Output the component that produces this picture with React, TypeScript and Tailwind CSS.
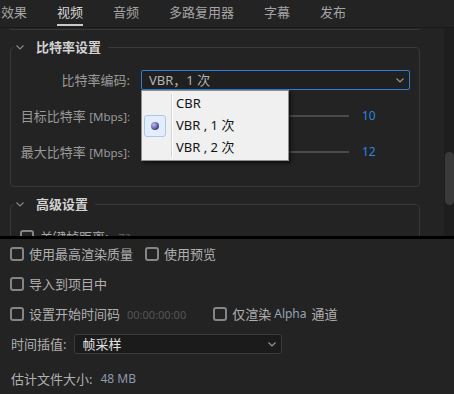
import React from "react";

const TABS = ["效果", "视频", "音频", "多路复用器", "字幕", "发布"];

function Chevron({ className }: { className?: string }) {
  return (
    <svg width="8" height="5" viewBox="0 0 8 5" className={className}>
      <polyline points="0.5,0.5 4,4 7.5,0.5" fill="none" stroke="currentColor" strokeWidth="1.1" />
    </svg>
  );
}

function Box() {
  return <span className="h-[14px] w-[14px] shrink-0 rounded-[3px] border-2 border-[#858585]" />;
}

function Legend({ title }: { title: string }) {
  return (
    <legend className="ml-[3px] flex h-[20px] items-center pl-[2px] pr-[7px]">
      <Chevron className="text-[#8a8a8a]" />
      <span className="ml-[12px] text-[13px] font-bold text-[#d2d2d2]">{title}</span>
    </legend>
  );
}

function SliderRow({ label, value }: { label: string; value: string }) {
  return (
    <div className="flex h-[20px] items-center">
      <div className="w-[119px] shrink-0 text-right text-[#9a9a9a]">
        <span className="text-[13px]">{label} </span>
        <span className="text-[11.5px]">[Mbps]:</span>
      </div>
      <div className="ml-[11px] h-[2px] w-[208px] bg-[#4a4a4a]" />
      <span className="ml-[13px] text-[12px] text-[#2a86e6]">{value}</span>
    </div>
  );
}

export default function App() {
  return (
    <div className="flex h-[394px] w-[454px] flex-col overflow-hidden bg-[#232323] font-['Noto_Sans','Noto_Sans_CJK_SC',sans-serif] text-[13px] leading-none">
      {/* upper panel */}
      <div className="flex h-[237px] flex-col overflow-hidden">
        <div className="flex h-[28px] shrink-0 items-start gap-[30px] border-b border-[#1a1a1a] pl-[1px]">
          {TABS.map((t) => (
            <div
              key={t}
              className={
                t === "视频"
                  ? "flex h-[26px] items-center border-b-2 border-[#c8c8c8] pt-[1px] text-[#d6d6d6]"
                  : "flex h-[26px] items-center border-b-2 border-transparent pt-[1px] text-[#a4a4a4]"
              }
            >
              {t}
            </div>
          ))}
        </div>

        <div className="flex min-h-0 flex-1">
          <div className="min-w-0 flex-1 overflow-hidden pl-[10px]">
            <div className="h-[2px] w-[410px] rounded-b-[4px] border-x border-b border-[#383838]" />

            <fieldset className="relative mt-[7px] w-[410px] rounded-[4px] border border-[#383838]">
              <Legend title="比特率设置" />
              <div className="flex flex-col gap-[16px] pb-[24px] pt-[13px]">
                <div className="flex h-[20px] items-center">
                  <div className="w-[119px] shrink-0 text-right text-[#9a9a9a]">比特率编码:</div>
                  <div className="relative ml-[11px]">
                    <div className="flex h-[20px] w-[269px] items-center justify-between rounded-[2px] border border-[#2f7fd4] bg-[#202020] pl-[7px] pr-[5px] text-[#b4b4b4]">
                      <span>VBR，1 次</span>
                      <Chevron className="text-[#9a9a9a]" />
                    </div>
                    <div className="absolute left-0 top-full z-10 flex h-[71px] w-[148px] border border-[#8e8e8e] bg-[#f0f0f0] py-[2px] shadow-[2px_2px_3px_rgba(0,0,0,0.6)]">
                      <div className="flex w-[29px] flex-col pl-[2px]">
                        <div className="h-[22px]" />
                        <div className="flex h-[22px] w-[22px] items-center justify-center rounded-[3px] border border-[#a8c8f0] bg-[#e4edfb]">
                          <span className="h-[8px] w-[8px] rounded-full bg-[radial-gradient(circle_at_35%_35%,#c0c0ec,#40408c_70%)]" />
                        </div>
                      </div>
                      <div className="my-[1px] w-[1px] bg-[#d4d4d4]" />
                      <div className="w-[1px] bg-white" />
                      <div className="flex flex-col pl-[3px] text-[13px] text-[#141414]">
                        <div className="flex h-[22px] items-center">CBR</div>
                        <div className="flex h-[22px] items-center">VBR , 1 次</div>
                        <div className="flex h-[22px] items-center">VBR , 2 次</div>
                      </div>
                    </div>
                  </div>
                </div>
                <SliderRow label="目标比特率" value="10" />
                <SliderRow label="最大比特率" value="12" />
              </div>
            </fieldset>

            <fieldset className="mt-[7px] w-[410px] rounded-[4px] border border-[#383838]">
              <Legend title="高级设置" />
              <div className="flex items-center gap-[6px] pl-[9px] pt-[16px]">
                <Box />
                <span className="text-[#a8a8a8]">关键帧距离:</span>
                <span className="ml-[4px] text-[11px] text-[#5c5c5c]">72</span>
              </div>
              <div className="h-[40px]" />
            </fieldset>
          </div>

          <div className="flex w-[10px] shrink-0 flex-col bg-[#1e1e1e]">
            <div className="ml-[1px] mt-[124px] h-[53px] w-[9px] rounded-full bg-[#3a3a3a]" />
          </div>
        </div>
      </div>

      <div className="h-[3px] shrink-0 bg-black" />

      {/* lower panel */}
      <div className="flex flex-col text-[#b0b0b0]">
        <div className="flex h-[30px] items-center pl-[10px]">
          <Box />
          <span className="ml-[5px]">使用最高渲染质量</span>
          <span className="ml-[12px]" />
          <Box />
          <span className="ml-[5px]">使用预览</span>
        </div>
        <div className="flex h-[30px] items-center pl-[10px]">
          <Box />
          <span className="ml-[5px]">导入到项目中</span>
        </div>
        <div className="flex h-[30px] items-center pl-[10px]">
          <Box />
          <span className="ml-[5px]">设置开始时间码</span>
          <span className="ml-[7px] text-[11px] text-[#555555]">00:00:00:00</span>
          <span className="ml-[27px]" />
          <Box />
          <span className="ml-[5px]">仅渲染</span>
          <span className="ml-[3px] text-[12px] text-[#98a2b4]">Alpha</span>
          <span className="ml-[5px]">通道</span>
        </div>
        <div className="flex h-[30px] items-center pl-[11px]">
          <span>时间插值:</span>
          <div className="ml-[8px] flex h-[20px] w-[208px] items-center justify-between rounded-[3px] border border-[#3a3a3a] bg-[#1b1b1b] pl-[7px] pr-[5px]">
            <span className="text-[#e2e2e2]">帧采样</span>
            <Chevron className="text-[#9a9a9a]" />
          </div>
        </div>
        <div className="mt-[5px] flex h-[30px] items-center pl-[11px]">
          <span>估计文件大小:</span>
          <span className="ml-[8px] text-[12px] text-[#8e98aa]">48 MB</span>
        </div>
      </div>
    </div>
  );
}
